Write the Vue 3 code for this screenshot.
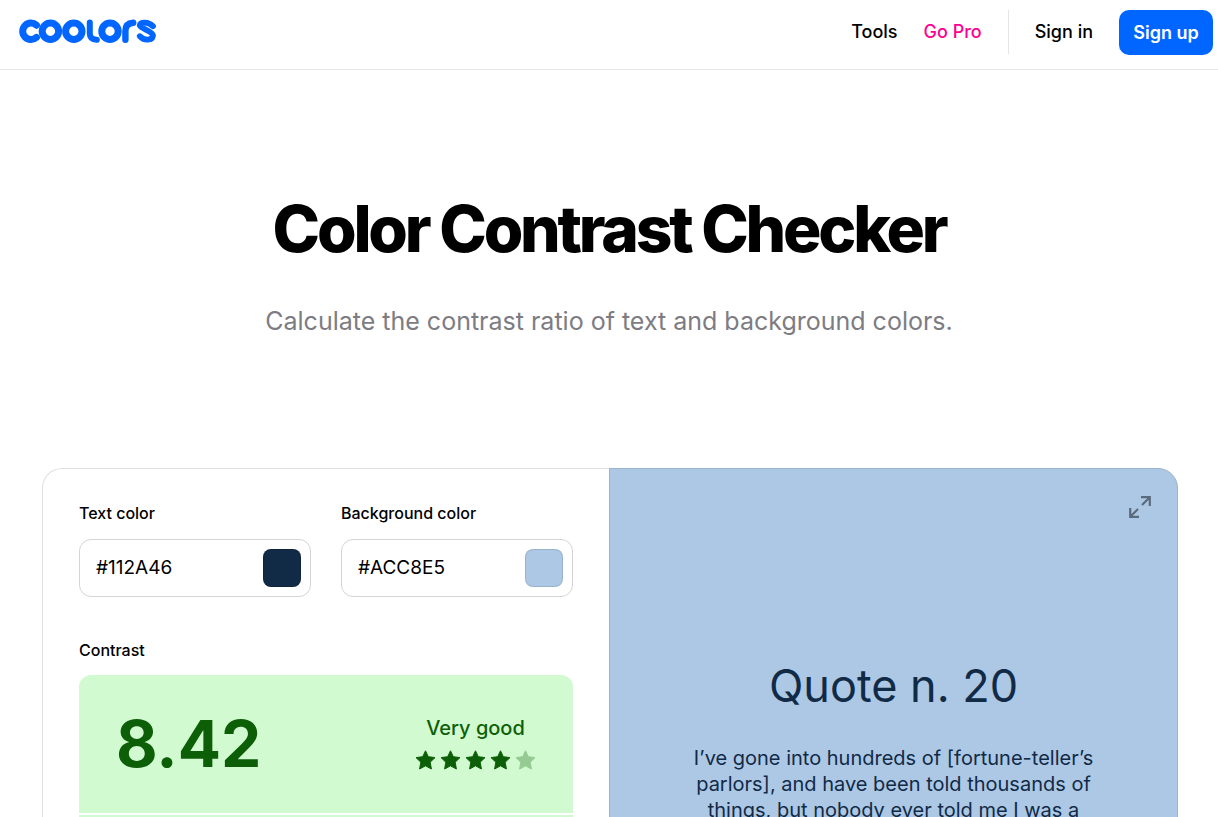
<script setup>
import { ref } from 'vue'

const textColor = ref('#112A46')
const backgroundColor = ref('#ACC8E5')
const rating = 4
</script>

<template>
  <div class="page">
    <header class="topbar">
      <a class="logo" href="#" aria-label="Coolors">
        <svg width="138" height="24" viewBox="0 0 138 24" fill="none" stroke="currentColor" stroke-width="7" stroke-linecap="round" stroke-linejoin="round">
          <path d="M17.4 6.2A8.2 8.2 0 1 0 17.4 18.4" />
          <circle cx="31.4" cy="12.3" r="8.2" />
          <circle cx="54.8" cy="12.3" r="8.2" />
          <path d="M70.8 3.4V14.4Q70.8 20.4 77.8 20.8" stroke-width="6" />
          <circle cx="91" cy="12.3" r="8.2" />
          <path d="M106.4 20.8V12Q106.4 4.4 114.2 3.8" stroke-width="6.4" />
          <path d="M134 7.2C129.4 2.4 120.4 2.6 120.8 6.6C122 9.8 133.4 12.2 134 16.4C133.4 21.8 125 22.2 120.8 17.2" stroke-width="5.8" />
        </svg>
      </a>
      <nav class="nav">
        <a href="#">Tools</a>
        <a class="pro" href="#">Go Pro</a>
        <span class="divider"></span>
        <a href="#">Sign in</a>
        <button class="signup" type="button">Sign up</button>
      </nav>
    </header>

    <main>
      <section class="hero">
        <h1>Color Contrast Checker</h1>
        <p>Calculate the contrast ratio of text and background colors.</p>
      </section>

      <section class="checker">
        <div class="controls">
          <div class="fields">
            <div class="field">
              <label for="text-color">Text color</label>
              <div class="inputbox">
                <input id="text-color" v-model="textColor" type="text" spellcheck="false">
                <button class="swatch dark" type="button" aria-label="Pick text color"></button>
              </div>
            </div>
            <div class="field">
              <label for="background-color">Background color</label>
              <div class="inputbox">
                <input id="background-color" v-model="backgroundColor" type="text" spellcheck="false">
                <button class="swatch light" type="button" aria-label="Pick background color"></button>
              </div>
            </div>
          </div>
          <h2>Contrast</h2>
          <div class="result">
            <div class="score">
              <strong>8.42</strong>
              <div class="verdict">
                <span>Very good</span>
                <div class="stars">
                  <svg v-for="n in 5" :key="n" :class="{ off: n > rating }" width="21" height="20" viewBox="0 0 21 20" fill="currentColor" stroke="currentColor" stroke-width="1" stroke-linejoin="round">
                    <path d="M10.5 0.8L13.3 6.7L20 7.6L15.2 12.2L16.4 19L10.5 15.8L4.6 19L5.8 12.2L1 7.6L7.7 6.7Z" />
                  </svg>
                </div>
              </div>
            </div>
            <div class="sizes"></div>
          </div>
        </div>

        <div class="preview">
          <button class="expand" type="button" aria-label="Fullscreen">
            <svg width="22" height="22" viewBox="0 0 22 22" fill="none" stroke="currentColor" stroke-width="2.2">
              <path d="M12 1.2H20.8V10M20.8 1.2L13 9M10 20.8H1.2V12M1.2 20.8L9 13" />
            </svg>
          </button>
          <h2>Quote n. 20</h2>
          <p>I’ve gone into hundreds of [fortune-teller’s parlors], and have been told thousands of things, but nobody ever told me I was a</p>
        </div>
      </section>
    </main>
  </div>
</template>

<style>
body {
  margin: 0;
  background: #fff;
}
</style>

<style scoped>
* {
  box-sizing: border-box;
}
.page {
  height: 100vh;
  overflow: hidden;
  font-family: Inter, "Liberation Sans", sans-serif;
  color: #000;
}
h1, h2, p {
  margin: 0;
}
a {
  color: inherit;
  text-decoration: none;
}
button {
  border: 0;
  padding: 0;
  font-family: inherit;
  cursor: pointer;
}
.topbar {
  display: flex;
  justify-content: space-between;
  align-items: flex-start;
  height: 70px;
  padding: 10px 5px 0 19px;
  border-bottom: 1px solid #e5e5e6;
}
.logo {
  display: flex;
  margin-top: 9px;
  color: #06f;
}
.nav {
  display: flex;
  align-items: flex-start;
  gap: 26px;
  font-size: 18px;
  font-weight: 500;
  line-height: 44px;
}
.pro {
  color: #ff0092;
}
.divider {
  width: 1px;
  height: 44px;
  background: #e5e5e6;
}
.signup {
  min-width: 94px;
  height: 45px;
  padding: 0 14px;
  border-radius: 10px;
  background: #06f;
  color: #fff;
  font-size: 18px;
  font-weight: 600;
}
.hero {
  padding: 120px 20px 0;
  text-align: center;
}
.hero h1 {
  font-size: 64px;
  line-height: 78px;
  font-weight: 800;
  letter-spacing: -0.05em;
}
.hero p {
  margin-top: 35px;
  font-size: 25px;
  line-height: 36px;
  color: #7d7c83;
}
.checker {
  display: grid;
  grid-template-columns: minmax(0, 1fr) minmax(0, 1fr);
  margin: 129px 40px 0 42px;
  min-height: 600px;
}
.controls {
  padding: 34px 37px 34px 36px;
  border: 1px solid #e0e0e2;
  border-right: 0;
  border-radius: 20px 0 0 20px;
}
.fields {
  display: grid;
  grid-template-columns: minmax(0, 1fr) minmax(0, 1fr);
  gap: 30px;
}
label, .controls h2 {
  display: block;
  font-size: 16px;
  line-height: 20px;
  font-weight: 500;
}
.inputbox {
  display: flex;
  align-items: center;
  height: 58px;
  margin-top: 16px;
  padding: 0 9px 0 16px;
  border: 1px solid #d5d5d7;
  border-radius: 12px;
}
input {
  flex: 1;
  min-width: 0;
  padding: 0 0 2px;
  border: 0;
  outline: 0;
  background: none;
  color: #000;
  font-family: inherit;
  font-size: 19px;
}
.swatch {
  width: 38px;
  height: 38px;
  border-radius: 8px;
  box-shadow: inset 0 0 0 1px rgba(0, 0, 0, 0.1);
}
.dark {
  background: #112a46;
}
.light {
  background: #acc8e5;
}
.controls h2 {
  margin-top: 43px;
}
.result {
  display: grid;
  gap: 2px;
  margin-top: 15px;
  border-radius: 12px;
  overflow: hidden;
  color: #0d5f07;
}
.score {
  display: flex;
  align-items: center;
  justify-content: space-between;
  height: 138px;
  padding: 0 37px;
  background: #d1fad0;
}
.score strong {
  font-size: 64px;
  font-weight: 700;
  line-height: 78px;
}
.verdict {
  display: grid;
  justify-items: center;
  gap: 10px;
  padding-bottom: 2px;
  font-size: 20px;
  line-height: 24px;
  font-weight: 500;
}
.stars {
  display: flex;
  gap: 4px;
}
.off {
  opacity: 0.3;
}
.sizes {
  height: 70px;
  background: #d1fad0;
}
.preview {
  position: relative;
  margin-left: -1px;
  padding: 189px 80px 0;
  border: 1px solid #9bb4ce;
  border-radius: 0 20px 20px 0;
  background: #acc8e5;
  color: #112a46;
  text-align: center;
}
.preview h2 {
  font-size: 45px;
  line-height: 56px;
  font-weight: 400;
}
.preview p {
  margin-top: 31px;
  font-size: 20px;
  line-height: 26px;
}
.expand {
  position: absolute;
  top: 27px;
  right: 26px;
  display: flex;
  background: none;
  color: #5b6b7d;
}
</style>
